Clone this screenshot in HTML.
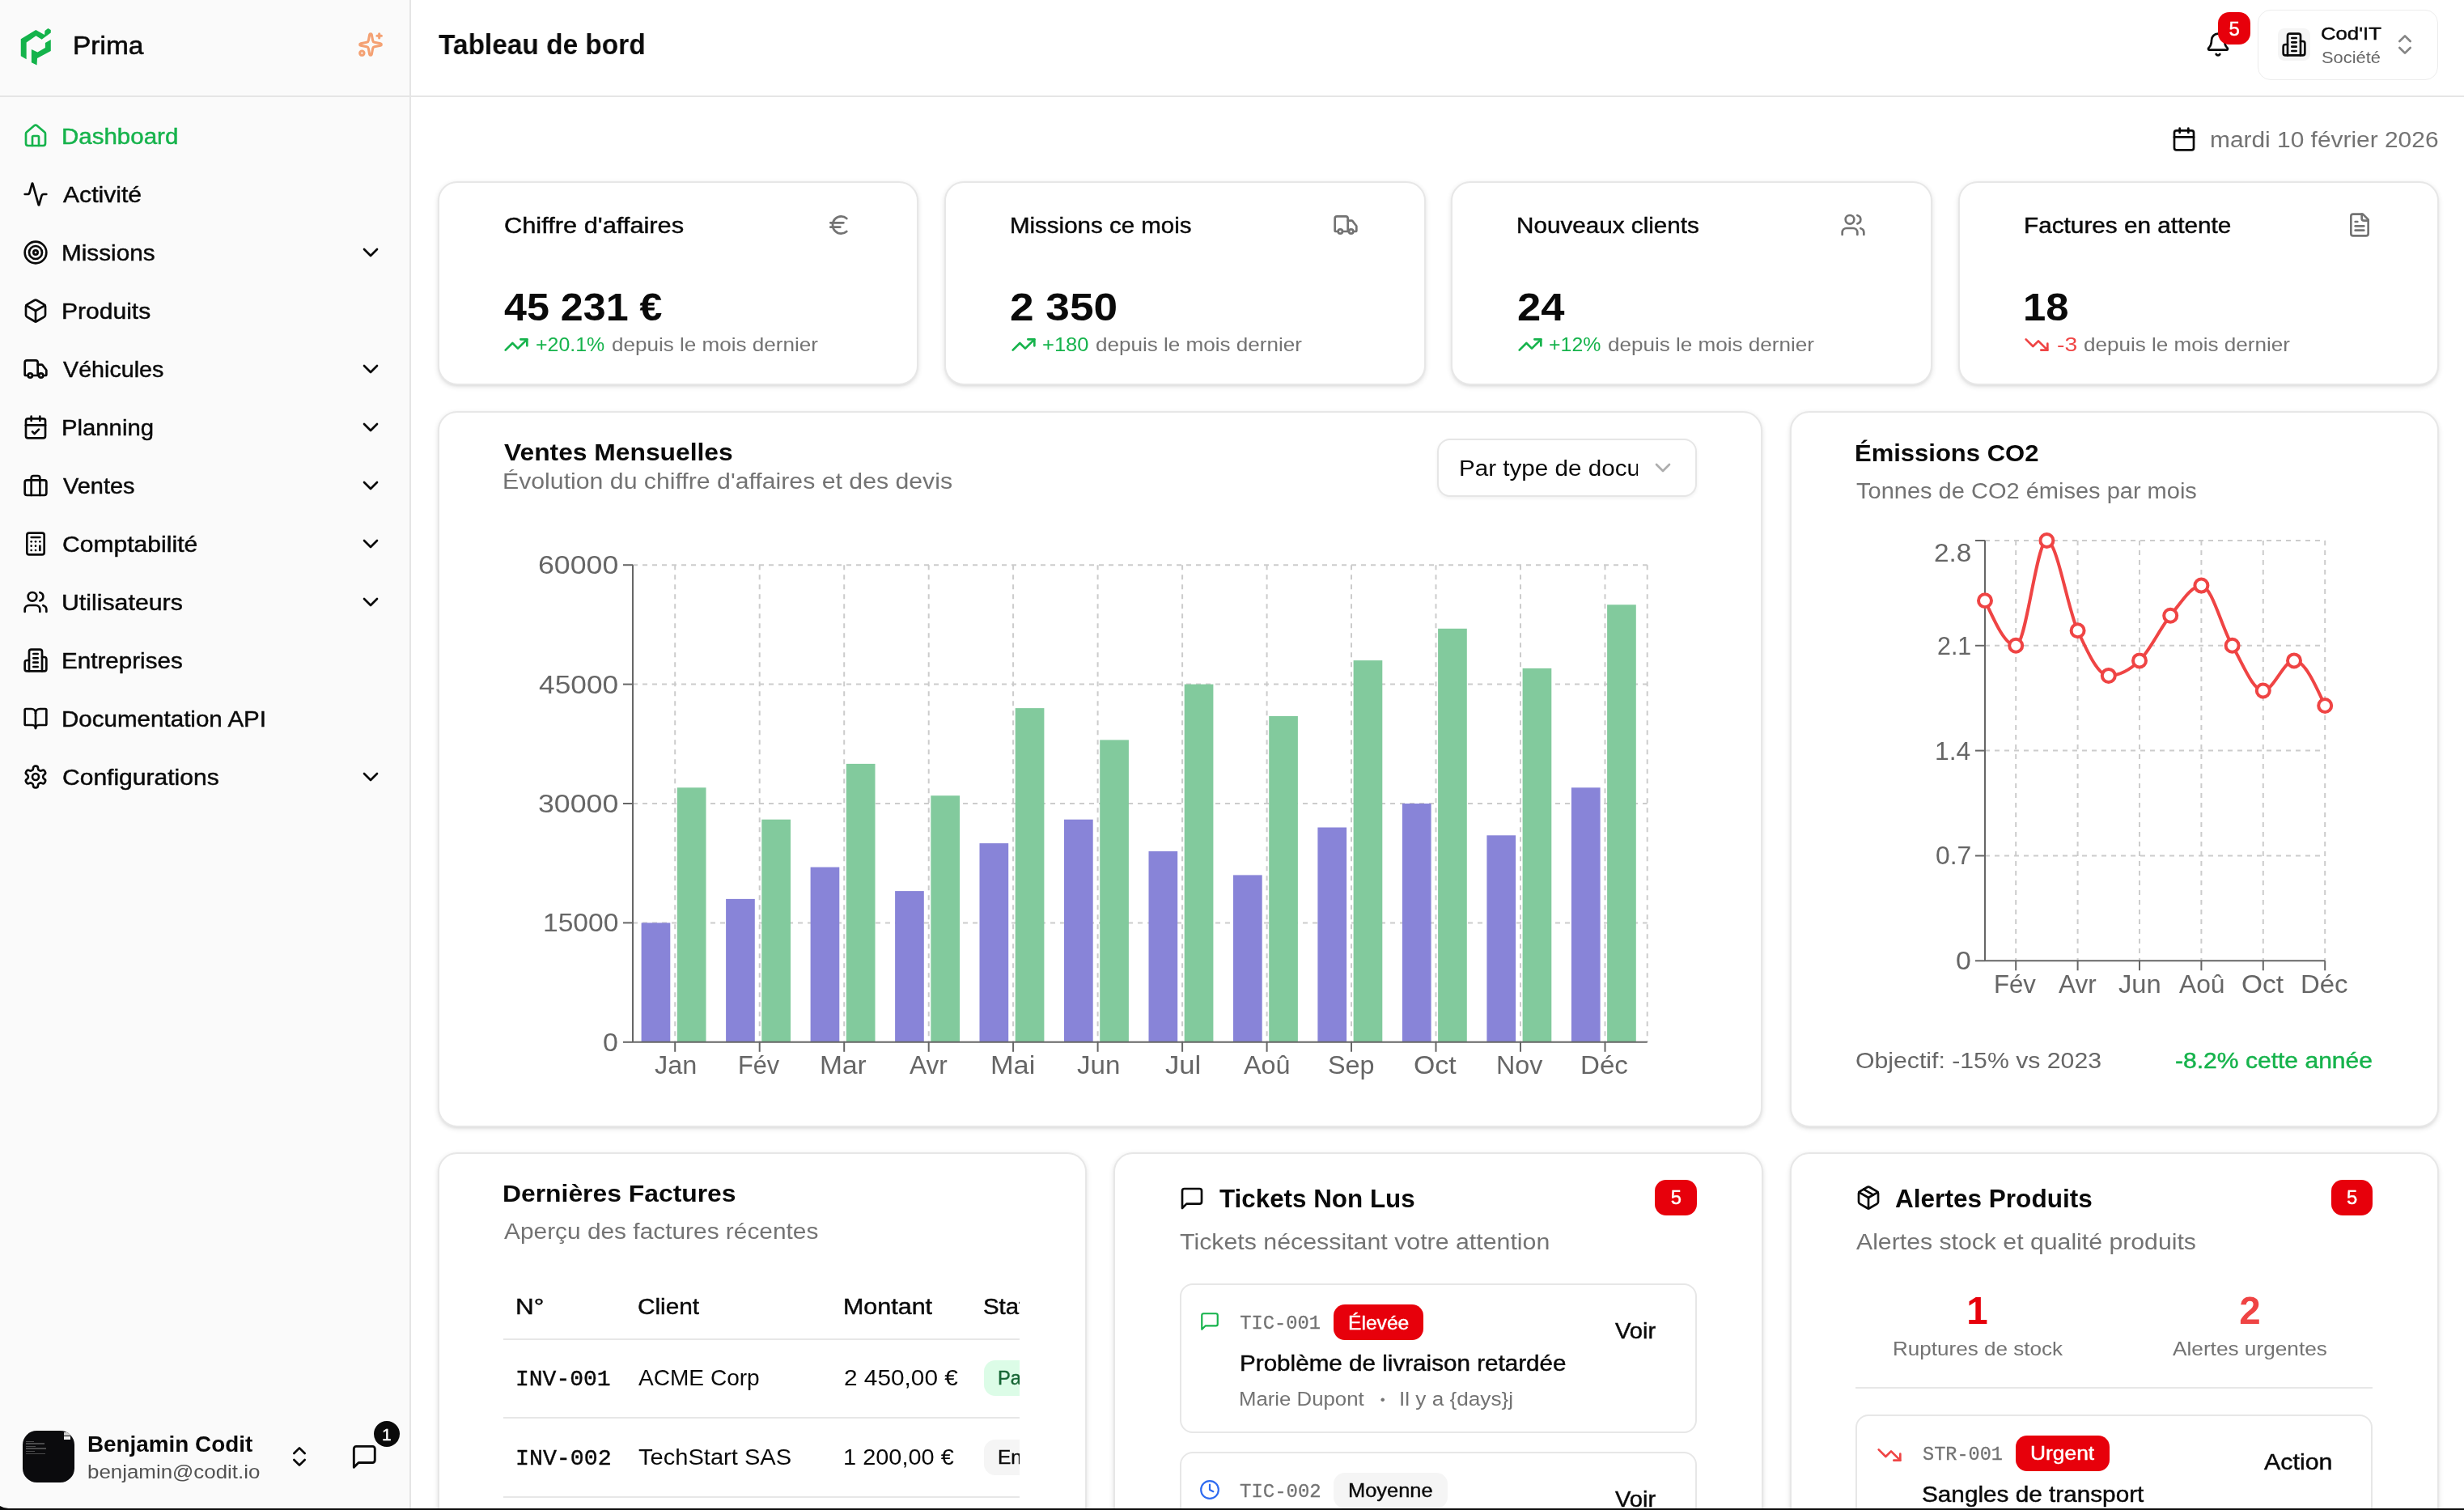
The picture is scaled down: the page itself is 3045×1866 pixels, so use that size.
<!DOCTYPE html>
<html lang="fr"><head><meta charset="utf-8"><title>Tableau de bord</title>
<style>
*{box-sizing:border-box;margin:0;padding:0}
html,body{width:3045px;height:1866px;overflow:hidden;background:#fff}
body{position:relative;font-family:"Liberation Sans",sans-serif;color:#0a0a0a;-webkit-font-smoothing:antialiased}
#root{position:absolute;left:0;top:0;width:3045px;height:1866px;will-change:transform}
.b,.i,.t,.c{position:absolute}
.t{white-space:pre;transform-origin:0 0;line-height:1}
.card{position:absolute;background:#fff;border:2px solid #e7e7e7;border-radius:24px;box-shadow:0 2px 6px rgba(0,0,0,.11),0 2px 4px -2px rgba(0,0,0,.11)}
.item{position:absolute;background:#fff;border:2px solid #e7e7e7;border-radius:16px}
.badge{position:absolute;border-radius:14px}
</style></head>
<body>
<div id="root">
<div class="b" style="left:0.00px;top:0.00px;width:506.00px;height:1866.00px;background:#fafafa"></div>
<div class="b" style="left:506.00px;top:0.00px;width:2.00px;height:1866.00px;background:#e5e5e5"></div>
<div class="b" style="left:0.00px;top:118.00px;width:3045.00px;height:2.00px;background:#e5e5e5"></div>
<svg class="i" style="left:20px;top:30px" width="50" height="55" viewBox="0 0 50 55"><g fill="#14b34b"><polygon points="5.76,18.25 24.27,7.05 35.03,13.08 35.47,7.91 39.34,5.12 42.78,7.05 42.78,10.50 31.59,18.68 24.49,14.37 12.65,22.55 12.65,43.21 5.76,39.34"/><polygon points="42.78,19.10 42.78,32.88 26.00,41.92 25.56,50.53 18.89,47.30 18.89,30.94 26.42,34.60 35.90,29.00 35.90,22.98"/></g></svg>
<div class="t" style="left:90.41px;top:40.00px;font-size:32px;color:#0a0a0a;transform:scaleX(1.0457);-webkit-text-stroke:0.6px #0a0a0a;">Prima</div>
<svg class="i" style="left:442.00px;top:38.90px" width="32" height="32" viewBox="0 0 24 24" fill="none" stroke="#f4a173" stroke-width="2.3" stroke-linecap="round" stroke-linejoin="round"><path d="M11.017 2.814a1 1 0 0 1 1.966 0l1.051 5.558a2 2 0 0 0 1.594 1.594l5.558 1.051a1 1 0 0 1 0 1.966l-5.558 1.051a2 2 0 0 0-1.594 1.594l-1.051 5.558a1 1 0 0 1-1.966 0l-1.051-5.558a2 2 0 0 0-1.594-1.594l-5.558-1.051a1 1 0 0 1 0-1.966l5.558-1.051a2 2 0 0 0 1.594-1.594z"/><path d="M20 2v4"/><path d="M22 4h-4"/><circle cx="4" cy="20" r="2"/></svg>
<svg class="i" style="left:27.80px;top:151.75px" width="32" height="32" viewBox="0 0 24 24" fill="none" stroke="#16b34c" stroke-width="2" stroke-linecap="round" stroke-linejoin="round"><path d="M15 21v-8a1 1 0 0 0-1-1h-4a1 1 0 0 0-1 1v8"/><path d="M3 10a2 2 0 0 1 .709-1.528l7-5.999a2 2 0 0 1 2.582 0l7 5.999A2 2 0 0 1 21 10v9a2 2 0 0 1-2 2H5a2 2 0 0 1-2-2z"/></svg>
<div class="t" style="left:75.97px;top:154.50px;font-size:27.7px;color:#16b34c;transform:scaleX(1.0655);-webkit-text-stroke:0.45px #16b34c;">Dashboard</div>
<svg class="i" style="left:27.80px;top:223.75px" width="32" height="32" viewBox="0 0 24 24" fill="none" stroke="#0a0a0a" stroke-width="2" stroke-linecap="round" stroke-linejoin="round"><path d="M22 12h-2.48a2 2 0 0 0-1.93 1.46l-2.35 8.36a.25.25 0 0 1-.48 0L9.24 2.18a.25.25 0 0 0-.48 0l-2.35 8.36A2 2 0 0 1 4.49 12H2"/></svg>
<div class="t" style="left:78.10px;top:226.50px;font-size:27.7px;color:#0a0a0a;transform:scaleX(1.0884);-webkit-text-stroke:0.45px #0a0a0a;">Activité</div>
<svg class="i" style="left:27.80px;top:295.75px" width="32" height="32" viewBox="0 0 24 24" fill="none" stroke="#0a0a0a" stroke-width="2" stroke-linecap="round" stroke-linejoin="round"><circle cx="12" cy="12" r="10"/><circle cx="12" cy="12" r="6"/><circle cx="12" cy="12" r="2"/></svg>
<div class="t" style="left:75.95px;top:298.50px;font-size:27.7px;color:#0a0a0a;transform:scaleX(1.0730);-webkit-text-stroke:0.45px #0a0a0a;">Missions</div>
<svg class="i" style="left:441.50px;top:295.75px" width="32" height="32" viewBox="0 0 24 24" fill="none" stroke="#0a0a0a" stroke-width="2" stroke-linecap="round" stroke-linejoin="round"><path d="m6 9 6 6 6-6"/></svg>
<svg class="i" style="left:27.80px;top:367.75px" width="32" height="32" viewBox="0 0 24 24" fill="none" stroke="#0a0a0a" stroke-width="2" stroke-linecap="round" stroke-linejoin="round"><path d="M21 8a2 2 0 0 0-1-1.73l-7-4a2 2 0 0 0-2 0l-7 4A2 2 0 0 0 3 8v8a2 2 0 0 0 1 1.73l7 4a2 2 0 0 0 2 0l7-4A2 2 0 0 0 21 16Z"/><path d="m3.3 7 8.7 5 8.7-5"/><path d="M12 22V12"/></svg>
<div class="t" style="left:75.93px;top:370.50px;font-size:27.7px;color:#0a0a0a;transform:scaleX(1.0848);-webkit-text-stroke:0.45px #0a0a0a;">Produits</div>
<svg class="i" style="left:27.80px;top:439.75px" width="32" height="32" viewBox="0 0 24 24" fill="none" stroke="#0a0a0a" stroke-width="2" stroke-linecap="round" stroke-linejoin="round"><path d="M14 18V6a2 2 0 0 0-2-2H4a2 2 0 0 0-2 2v11a1 1 0 0 0 1 1h2"/><path d="M15 18H9"/><path d="M19 18h2a1 1 0 0 0 1-1v-3.65a1 1 0 0 0-.22-.624l-3.48-4.35A1 1 0 0 0 17.52 8H14"/><circle cx="17" cy="18" r="2"/><circle cx="7" cy="18" r="2"/></svg>
<div class="t" style="left:78.10px;top:442.50px;font-size:27.7px;color:#0a0a0a;transform:scaleX(1.0360);-webkit-text-stroke:0.45px #0a0a0a;">Véhicules</div>
<svg class="i" style="left:441.50px;top:439.75px" width="32" height="32" viewBox="0 0 24 24" fill="none" stroke="#0a0a0a" stroke-width="2" stroke-linecap="round" stroke-linejoin="round"><path d="m6 9 6 6 6-6"/></svg>
<svg class="i" style="left:27.80px;top:511.75px" width="32" height="32" viewBox="0 0 24 24" fill="none" stroke="#0a0a0a" stroke-width="2" stroke-linecap="round" stroke-linejoin="round"><path d="M8 2v4"/><path d="M16 2v4"/><rect width="18" height="18" x="3" y="4" rx="2"/><path d="M3 10h18"/><path d="m9 16 2 2 4-4"/></svg>
<div class="t" style="left:75.98px;top:514.50px;font-size:27.7px;color:#0a0a0a;transform:scaleX(1.0578);-webkit-text-stroke:0.45px #0a0a0a;">Planning</div>
<svg class="i" style="left:441.50px;top:511.75px" width="32" height="32" viewBox="0 0 24 24" fill="none" stroke="#0a0a0a" stroke-width="2" stroke-linecap="round" stroke-linejoin="round"><path d="m6 9 6 6 6-6"/></svg>
<svg class="i" style="left:27.80px;top:583.75px" width="32" height="32" viewBox="0 0 24 24" fill="none" stroke="#0a0a0a" stroke-width="2" stroke-linecap="round" stroke-linejoin="round"><rect width="20" height="14" x="2" y="7" rx="2" ry="2"/><path d="M16 21V5a2 2 0 0 0-2-2h-4a2 2 0 0 0-2 2v16"/></svg>
<div class="t" style="left:78.10px;top:586.50px;font-size:27.7px;color:#0a0a0a;transform:scaleX(1.0462);-webkit-text-stroke:0.45px #0a0a0a;">Ventes</div>
<svg class="i" style="left:441.50px;top:583.75px" width="32" height="32" viewBox="0 0 24 24" fill="none" stroke="#0a0a0a" stroke-width="2" stroke-linecap="round" stroke-linejoin="round"><path d="m6 9 6 6 6-6"/></svg>
<svg class="i" style="left:27.80px;top:655.75px" width="32" height="32" viewBox="0 0 24 24" fill="none" stroke="#0a0a0a" stroke-width="2" stroke-linecap="round" stroke-linejoin="round"><rect width="16" height="20" x="4" y="2" rx="2"/><line x1="8" x2="16" y1="6" y2="6"/><line x1="16" x2="16" y1="14" y2="18"/><path d="M16 10h.01"/><path d="M12 10h.01"/><path d="M8 10h.01"/><path d="M12 14h.01"/><path d="M8 14h.01"/><path d="M12 18h.01"/><path d="M8 18h.01"/></svg>
<div class="t" style="left:77.01px;top:658.50px;font-size:27.7px;color:#0a0a0a;transform:scaleX(1.0866);-webkit-text-stroke:0.45px #0a0a0a;">Comptabilité</div>
<svg class="i" style="left:441.50px;top:655.75px" width="32" height="32" viewBox="0 0 24 24" fill="none" stroke="#0a0a0a" stroke-width="2" stroke-linecap="round" stroke-linejoin="round"><path d="m6 9 6 6 6-6"/></svg>
<svg class="i" style="left:27.80px;top:727.75px" width="32" height="32" viewBox="0 0 24 24" fill="none" stroke="#0a0a0a" stroke-width="2" stroke-linecap="round" stroke-linejoin="round"><path d="M16 21v-2a4 4 0 0 0-4-4H6a4 4 0 0 0-4 4v2"/><circle cx="9" cy="7" r="4"/><path d="M22 21v-2a4 4 0 0 0-3-3.87"/><path d="M16 3.13a4 4 0 0 1 0 7.75"/></svg>
<div class="t" style="left:75.91px;top:730.50px;font-size:27.7px;color:#0a0a0a;transform:scaleX(1.0940);-webkit-text-stroke:0.45px #0a0a0a;">Utilisateurs</div>
<svg class="i" style="left:441.50px;top:727.75px" width="32" height="32" viewBox="0 0 24 24" fill="none" stroke="#0a0a0a" stroke-width="2" stroke-linecap="round" stroke-linejoin="round"><path d="m6 9 6 6 6-6"/></svg>
<svg class="i" style="left:27.80px;top:799.75px" width="32" height="32" viewBox="0 0 24 24" fill="none" stroke="#0a0a0a" stroke-width="2" stroke-linecap="round" stroke-linejoin="round"><path d="M6 22V4a2 2 0 0 1 2-2h8a2 2 0 0 1 2 2v18Z"/><path d="M6 12H4a2 2 0 0 0-2 2v6a2 2 0 0 0 2 2h2"/><path d="M18 9h2a2 2 0 0 1 2 2v9a2 2 0 0 1-2 2h-2"/><path d="M10 6h4"/><path d="M10 10h4"/><path d="M10 14h4"/><path d="M10 18h4"/></svg>
<div class="t" style="left:75.96px;top:802.50px;font-size:27.7px;color:#0a0a0a;transform:scaleX(1.0693);-webkit-text-stroke:0.45px #0a0a0a;">Entreprises</div>
<svg class="i" style="left:27.80px;top:871.75px" width="32" height="32" viewBox="0 0 24 24" fill="none" stroke="#0a0a0a" stroke-width="2" stroke-linecap="round" stroke-linejoin="round"><path d="M12 7v14"/><path d="M3 18a1 1 0 0 1-1-1V4a1 1 0 0 1 1-1h5a4 4 0 0 1 4 4 4 4 0 0 1 4-4h5a1 1 0 0 1 1 1v13a1 1 0 0 1-1 1h-6a3 3 0 0 0-3 3 3 3 0 0 0-3-3z"/></svg>
<div class="t" style="left:75.97px;top:874.50px;font-size:27.7px;color:#0a0a0a;transform:scaleX(1.0675);-webkit-text-stroke:0.45px #0a0a0a;">Documentation API</div>
<svg class="i" style="left:27.80px;top:943.75px" width="32" height="32" viewBox="0 0 24 24" fill="none" stroke="#0a0a0a" stroke-width="2" stroke-linecap="round" stroke-linejoin="round"><path d="M12.22 2h-.44a2 2 0 0 0-2 2v.18a2 2 0 0 1-1 1.73l-.43.25a2 2 0 0 1-2 0l-.15-.08a2 2 0 0 0-2.73.73l-.22.38a2 2 0 0 0 .73 2.73l.15.1a2 2 0 0 1 1 1.72v.51a2 2 0 0 1-1 1.74l-.15.09a2 2 0 0 0-.73 2.73l.22.38a2 2 0 0 0 2.73.73l.15-.08a2 2 0 0 1 2 0l.43.25a2 2 0 0 1 1 1.73V20a2 2 0 0 0 2 2h.44a2 2 0 0 0 2-2v-.18a2 2 0 0 1 1-1.73l.43-.25a2 2 0 0 1 2 0l.15.08a2 2 0 0 0 2.73-.73l.22-.39a2 2 0 0 0-.73-2.73l-.15-.08a2 2 0 0 1-1-1.74v-.5a2 2 0 0 1 1-1.74l.15-.09a2 2 0 0 0 .73-2.73l-.22-.38a2 2 0 0 0-2.73-.73l-.15.08a2 2 0 0 1-2 0l-.43-.25a2 2 0 0 1-1-1.73V4a2 2 0 0 0-2-2z"/><circle cx="12" cy="12" r="3"/></svg>
<div class="t" style="left:77.02px;top:946.50px;font-size:27.7px;color:#0a0a0a;transform:scaleX(1.0849);-webkit-text-stroke:0.45px #0a0a0a;">Configurations</div>
<svg class="i" style="left:441.50px;top:943.75px" width="32" height="32" viewBox="0 0 24 24" fill="none" stroke="#0a0a0a" stroke-width="2" stroke-linecap="round" stroke-linejoin="round"><path d="m6 9 6 6 6-6"/></svg>
<div class="b" style="left:28px;top:1768px;width:63.8px;height:63.8px;background:#0b0b0d;border-radius:17.5px;overflow:hidden"><div class="b" style="left:50.8px;top:1.5px;width:8.5px;height:4.3px;background:#cfcfcf"></div><div class="b" style="left:50.8px;top:7.4px;width:8.5px;height:3.6px;background:#f2f2f2"></div><div class="b" style="left:4.2px;top:15.3px;width:23.3px;height:1.7px;background:#8a8a8a;opacity:.5"></div><div class="b" style="left:3.5px;top:13.4px;width:10px;height:1px;background:#777;opacity:.6"></div><div class="b" style="left:4.2px;top:21.1px;width:24.4px;height:1.7px;background:#8a8a8a;opacity:.5"></div><div class="b" style="left:3.5px;top:19.4px;width:12px;height:1px;background:#777;opacity:.6"></div><div class="b" style="left:4.2px;top:27.5px;width:23.8px;height:1.7px;background:#8a8a8a;opacity:.5"></div><div class="b" style="left:3.5px;top:25.4px;width:11px;height:1px;background:#777;opacity:.6"></div></div>
<div class="t" style="left:107.79px;top:1771.15px;font-size:27.7px;color:#0a0a0a;font-weight:700;transform:scaleX(1.0058);">Benjamin Codit</div>
<div class="t" style="left:107.71px;top:1806.62px;font-size:23.76px;color:#525252;transform:scaleX(1.0898);">benjamin@codit.io</div>
<svg class="i" style="left:354.00px;top:1784.00px" width="32" height="32" viewBox="0 0 24 24" fill="none" stroke="#0a0a0a" stroke-width="2" stroke-linecap="round" stroke-linejoin="round"><path d="m7 15 5 5 5-5"/><path d="m7 9 5-5 5 5"/></svg>
<svg class="i" style="left:433.20px;top:1783.10px" width="34.6" height="34.6" viewBox="0 0 24 24" fill="none" stroke="#0a0a0a" stroke-width="2" stroke-linecap="round" stroke-linejoin="round"><path d="M21 15a2 2 0 0 1-2 2H7l-4 4V5a2 2 0 0 1 2-2h14a2 2 0 0 1 2 2z"/></svg>
<div class="b" style="left:462.00px;top:1756.00px;width:32.00px;height:32.00px;background:#0a0a0a;border-radius:16px"></div>
<div class="t" style="left:472.00px;top:1761.50px;font-size:21px;color:#fff;-webkit-text-stroke:0.4px #fff;">1</div>
<div class="t" style="left:542.00px;top:38.40px;font-size:35.6px;color:#0a0a0a;font-weight:700;transform:scaleX(0.9393);">Tableau de bord</div>
<svg class="i" style="left:2725.00px;top:39.00px" width="32" height="32" viewBox="0 0 24 24" fill="none" stroke="#0a0a0a" stroke-width="2" stroke-linecap="round" stroke-linejoin="round"><path d="M10.268 21a2 2 0 0 0 3.464 0"/><path d="M3.262 15.326A1 1 0 0 0 4 17h16a1 1 0 0 0 .74-1.673C19.41 13.956 18 12.499 18 8A6 6 0 0 0 6 8c0 4.499-1.411 5.956-2.738 7.326"/></svg>
<div class="b" style="left:2741.00px;top:15.00px;width:40.00px;height:40.00px;background:#e7000b;border-radius:14px"></div>
<div class="t" style="left:2754.50px;top:23.80px;font-size:24px;color:#fff;-webkit-text-stroke:0.4px #fff;">5</div>
<div class="b" style="left:2790.00px;top:11.60px;width:223.00px;height:87.00px;border:1.5px solid #ececec;border-radius:16px;background:#fff"></div>
<div class="b" style="left:2815.00px;top:35.00px;width:40.00px;height:40.00px;background:#f5f5f5;border-radius:8px"></div>
<svg class="i" style="left:2819.00px;top:39.00px" width="32" height="32" viewBox="0 0 24 24" fill="none" stroke="#0a0a0a" stroke-width="2" stroke-linecap="round" stroke-linejoin="round"><path d="M6 22V4a2 2 0 0 1 2-2h8a2 2 0 0 1 2 2v18Z"/><path d="M6 12H4a2 2 0 0 0-2 2v6a2 2 0 0 0 2 2h2"/><path d="M18 9h2a2 2 0 0 1 2 2v9a2 2 0 0 1-2 2h-2"/><path d="M10 6h4"/><path d="M10 10h4"/><path d="M10 14h4"/><path d="M10 18h4"/></svg>
<div class="t" style="left:2867.56px;top:31.40px;font-size:22.6px;color:#0a0a0a;transform:scaleX(1.1378);-webkit-text-stroke:0.45px #0a0a0a;">Cod'IT</div>
<div class="t" style="left:2868.70px;top:61.60px;font-size:19.4px;color:#666;transform:scaleX(1.1269);">Société</div>
<svg class="i" style="left:2955.80px;top:39.00px" width="32" height="32" viewBox="0 0 24 24" fill="none" stroke="#858585" stroke-width="2" stroke-linecap="round" stroke-linejoin="round"><path d="m7 15 5 5 5-5"/><path d="m7 9 5-5 5 5"/></svg>
<svg class="i" style="left:2683.00px;top:155.50px" width="32" height="32" viewBox="0 0 24 24" fill="none" stroke="#0a0a0a" stroke-width="2" stroke-linecap="round" stroke-linejoin="round"><path d="M8 2v4"/><path d="M16 2v4"/><rect width="18" height="18" x="3" y="4" rx="2"/><path d="M3 10h18"/></svg>
<div class="t" style="left:2730.62px;top:158.65px;font-size:27.7px;color:#737373;transform:scaleX(1.0798);">mardi 10 février 2026</div>
<div class="card" style="left:540.7px;top:224px;width:594.5px;height:252.4px"></div>
<div class="t" style="left:622.89px;top:264.85px;font-size:27.7px;color:#0a0a0a;transform:scaleX(1.1123);-webkit-text-stroke:0.45px #0a0a0a;">Chiffre d'affaires</div>
<svg class="i" style="left:1021.00px;top:261.50px" width="32" height="32" viewBox="0 0 24 24" fill="none" stroke="#737373" stroke-width="2" stroke-linecap="round" stroke-linejoin="round"><path d="M4 10h12"/><path d="M4 14h9"/><path d="M19 6a7.7 7.7 0 0 0-5.2-2A7.9 7.9 0 0 0 6 12c0 4.4 3.5 8 7.8 8 2 0 3.8-.8 5.2-2"/></svg>
<div class="t" style="left:623.10px;top:355.75px;font-size:47.5px;color:#0a0a0a;font-weight:700;transform:scaleX(1.0570);">45 231 €</div>
<svg class="i" style="left:622.40px;top:410.00px" width="32" height="32" viewBox="0 0 24 24" fill="none" stroke="#16b34c" stroke-width="2" stroke-linecap="round" stroke-linejoin="round"><polyline points="22 7 13.5 15.5 8.5 10.5 2 17"/><polyline points="16 7 22 7 22 13"/></svg>
<div class="t" style="left:661.55px;top:414.12px;font-size:23.76px;color:#16b34c;transform:scaleX(1.0488);">+20.1%</div>
<div class="t" style="left:755.50px;top:414.12px;font-size:23.76px;color:#737373;transform:scaleX(1.0975);">depuis le mois dernier</div>
<div class="card" style="left:1167.0px;top:224px;width:594.5px;height:252.4px"></div>
<div class="t" style="left:1248.17px;top:264.85px;font-size:27.7px;color:#0a0a0a;transform:scaleX(1.0652);-webkit-text-stroke:0.45px #0a0a0a;">Missions ce mois</div>
<svg class="i" style="left:1647.30px;top:261.50px" width="32" height="32" viewBox="0 0 24 24" fill="none" stroke="#737373" stroke-width="2" stroke-linecap="round" stroke-linejoin="round"><path d="M14 18V6a2 2 0 0 0-2-2H4a2 2 0 0 0-2 2v11a1 1 0 0 0 1 1h2"/><path d="M15 18H9"/><path d="M19 18h2a1 1 0 0 0 1-1v-3.65a1 1 0 0 0-.22-.624l-3.48-4.35A1 1 0 0 0 17.52 8H14"/><circle cx="17" cy="18" r="2"/><circle cx="7" cy="18" r="2"/></svg>
<div class="t" style="left:1248.28px;top:355.75px;font-size:47.5px;color:#0a0a0a;font-weight:700;transform:scaleX(1.1198);">2 350</div>
<svg class="i" style="left:1248.70px;top:410.00px" width="32" height="32" viewBox="0 0 24 24" fill="none" stroke="#16b34c" stroke-width="2" stroke-linecap="round" stroke-linejoin="round"><polyline points="22 7 13.5 15.5 8.5 10.5 2 17"/><polyline points="16 7 22 7 22 13"/></svg>
<div class="t" style="left:1287.83px;top:414.12px;font-size:23.76px;color:#16b34c;transform:scaleX(1.0748);">+180</div>
<div class="t" style="left:1354.00px;top:414.12px;font-size:23.76px;color:#737373;transform:scaleX(1.0975);">depuis le mois dernier</div>
<div class="card" style="left:1793.3px;top:224px;width:594.5px;height:252.4px"></div>
<div class="t" style="left:1874.46px;top:264.85px;font-size:27.7px;color:#0a0a0a;transform:scaleX(1.0716);-webkit-text-stroke:0.45px #0a0a0a;">Nouveaux clients</div>
<svg class="i" style="left:2273.60px;top:261.50px" width="32" height="32" viewBox="0 0 24 24" fill="none" stroke="#737373" stroke-width="2" stroke-linecap="round" stroke-linejoin="round"><path d="M16 21v-2a4 4 0 0 0-4-4H6a4 4 0 0 0-4 4v2"/><circle cx="9" cy="7" r="4"/><path d="M22 21v-2a4 4 0 0 0-3-3.87"/><path d="M16 3.13a4 4 0 0 1 0 7.75"/></svg>
<div class="t" style="left:1874.59px;top:355.75px;font-size:47.5px;color:#0a0a0a;font-weight:700;transform:scaleX(1.1065);">24</div>
<svg class="i" style="left:1875.00px;top:410.00px" width="32" height="32" viewBox="0 0 24 24" fill="none" stroke="#16b34c" stroke-width="2" stroke-linecap="round" stroke-linejoin="round"><polyline points="22 7 13.5 15.5 8.5 10.5 2 17"/><polyline points="16 7 22 7 22 13"/></svg>
<div class="t" style="left:1914.15px;top:414.12px;font-size:23.76px;color:#16b34c;transform:scaleX(1.0483);">+12%</div>
<div class="t" style="left:1987.30px;top:414.12px;font-size:23.76px;color:#737373;transform:scaleX(1.0975);">depuis le mois dernier</div>
<div class="card" style="left:2419.6px;top:224px;width:594.5px;height:252.4px"></div>
<div class="t" style="left:2500.75px;top:264.85px;font-size:27.7px;color:#0a0a0a;transform:scaleX(1.0743);-webkit-text-stroke:0.45px #0a0a0a;">Factures en attente</div>
<svg class="i" style="left:2899.90px;top:261.50px" width="32" height="32" viewBox="0 0 24 24" fill="none" stroke="#737373" stroke-width="2" stroke-linecap="round" stroke-linejoin="round"><path d="M15 2H6a2 2 0 0 0-2 2v16a2 2 0 0 0 2 2h12a2 2 0 0 0 2-2V7Z"/><path d="M14 2v4a2 2 0 0 0 2 2h4"/><path d="M10 9H8"/><path d="M16 13H8"/><path d="M16 17H8"/></svg>
<div class="t" style="left:2499.86px;top:355.75px;font-size:47.5px;color:#0a0a0a;font-weight:700;transform:scaleX(1.0705);">18</div>
<svg class="i" style="left:2501.30px;top:410.00px" width="32" height="32" viewBox="0 0 24 24" fill="none" stroke="#ef4444" stroke-width="2" stroke-linecap="round" stroke-linejoin="round"><polyline points="22 17 13.5 8.5 8.5 13.5 2 7"/><polyline points="16 17 22 17 22 11"/></svg>
<div class="t" style="left:2541.81px;top:414.12px;font-size:23.76px;color:#ef4444;transform:scaleX(1.1904);">-3</div>
<div class="t" style="left:2575.30px;top:414.12px;font-size:23.76px;color:#737373;transform:scaleX(1.0975);">depuis le mois dernier</div>
<div class="card" style="left:540.7px;top:508px;width:1637.4px;height:884.5px"></div>
<div class="t" style="left:623.40px;top:544.10px;font-size:30px;color:#0a0a0a;font-weight:700;transform:scaleX(1.0597);">Ventes Mensuelles</div>
<div class="t" style="left:621.22px;top:580.85px;font-size:27.7px;color:#737373;transform:scaleX(1.0923);">Évolution du chiffre d'affaires et des devis</div>
<div class="b" style="left:1776.40px;top:541.80px;width:320.60px;height:71.80px;border:2px solid #e6e6e6;border-radius:16px;background:#fff;box-shadow:0 2px 4px rgba(0,0,0,.06)"></div>
<div class="c" style="left:1790px;top:550px;width:233.8px;height:56px;overflow:hidden">
<div class="t" style="left:12.86px;top:15.05px;font-size:27.7px;color:#0a0a0a;transform:scaleX(1.0698);">Par type de docu</div>
</div>
<svg class="i" style="left:2038.60px;top:562.20px" width="32" height="32" viewBox="0 0 24 24" fill="none" stroke="#adadad" stroke-width="2" stroke-linecap="round" stroke-linejoin="round"><path d="m6 9 6 6 6-6"/></svg>
<div class="card" style="left:2212.3px;top:508px;width:801.7px;height:884.5px"></div>
<svg class="i" style="left:0;top:0" width="3045" height="1866" viewBox="0 0 3045 1866"><g stroke="#ccc" stroke-width="2" stroke-dasharray="6 6" fill="none"><line x1="782.0" y1="1140.4" x2="2035.7" y2="1140.4"/><line x1="782.0" y1="993.0" x2="2035.7" y2="993.0"/><line x1="782.0" y1="845.6" x2="2035.7" y2="845.6"/><line x1="782.0" y1="698.2" x2="2035.7" y2="698.2"/><line x1="834.2" y1="698.2" x2="834.2" y2="1287.8"/><line x1="938.7" y1="698.2" x2="938.7" y2="1287.8"/><line x1="1043.2" y1="698.2" x2="1043.2" y2="1287.8"/><line x1="1147.7" y1="698.2" x2="1147.7" y2="1287.8"/><line x1="1252.1" y1="698.2" x2="1252.1" y2="1287.8"/><line x1="1356.6" y1="698.2" x2="1356.6" y2="1287.8"/><line x1="1461.1" y1="698.2" x2="1461.1" y2="1287.8"/><line x1="1565.6" y1="698.2" x2="1565.6" y2="1287.8"/><line x1="1670.0" y1="698.2" x2="1670.0" y2="1287.8"/><line x1="1774.5" y1="698.2" x2="1774.5" y2="1287.8"/><line x1="1879.0" y1="698.2" x2="1879.0" y2="1287.8"/><line x1="1983.5" y1="698.2" x2="1983.5" y2="1287.8"/><line x1="2035.7" y1="698.2" x2="2035.7" y2="1287.8"/></g><rect x="792.6" y="1140.4" width="35.7" height="147.4" fill="#8884d8"/><rect x="836.8" y="973.3" width="35.7" height="314.5" fill="#82ca9d"/><rect x="897.1" y="1110.9" width="35.7" height="176.9" fill="#8884d8"/><rect x="941.3" y="1012.7" width="35.7" height="275.1" fill="#82ca9d"/><rect x="1001.6" y="1071.6" width="35.7" height="216.2" fill="#8884d8"/><rect x="1045.8" y="943.9" width="35.7" height="343.9" fill="#82ca9d"/><rect x="1106.1" y="1101.1" width="35.7" height="186.7" fill="#8884d8"/><rect x="1150.3" y="983.2" width="35.7" height="304.6" fill="#82ca9d"/><rect x="1210.5" y="1042.1" width="35.7" height="245.7" fill="#8884d8"/><rect x="1254.7" y="875.1" width="35.7" height="412.7" fill="#82ca9d"/><rect x="1315.0" y="1012.7" width="35.7" height="275.1" fill="#8884d8"/><rect x="1359.2" y="914.4" width="35.7" height="373.4" fill="#82ca9d"/><rect x="1419.5" y="1052.0" width="35.7" height="235.8" fill="#8884d8"/><rect x="1463.7" y="845.6" width="35.7" height="442.2" fill="#82ca9d"/><rect x="1524.0" y="1081.4" width="35.7" height="206.4" fill="#8884d8"/><rect x="1568.2" y="884.9" width="35.7" height="402.9" fill="#82ca9d"/><rect x="1628.4" y="1022.5" width="35.7" height="265.3" fill="#8884d8"/><rect x="1672.6" y="816.1" width="35.7" height="471.7" fill="#82ca9d"/><rect x="1732.9" y="993.0" width="35.7" height="294.8" fill="#8884d8"/><rect x="1777.1" y="776.8" width="35.7" height="511.0" fill="#82ca9d"/><rect x="1837.4" y="1032.3" width="35.7" height="255.5" fill="#8884d8"/><rect x="1881.6" y="825.9" width="35.7" height="461.9" fill="#82ca9d"/><rect x="1941.9" y="973.3" width="35.7" height="314.5" fill="#8884d8"/><rect x="1986.1" y="747.3" width="35.7" height="540.5" fill="#82ca9d"/><g stroke="#666" stroke-width="2" fill="none"><line x1="782.0" y1="698.2" x2="782.0" y2="1287.8"/><line x1="782.0" y1="1287.8" x2="2035.7" y2="1287.8"/><line x1="770.0" y1="1287.8" x2="782.0" y2="1287.8"/><line x1="770.0" y1="1140.4" x2="782.0" y2="1140.4"/><line x1="770.0" y1="993.0" x2="782.0" y2="993.0"/><line x1="770.0" y1="845.6" x2="782.0" y2="845.6"/><line x1="770.0" y1="698.2" x2="782.0" y2="698.2"/><line x1="834.2" y1="1287.8" x2="834.2" y2="1299.8"/><line x1="938.7" y1="1287.8" x2="938.7" y2="1299.8"/><line x1="1043.2" y1="1287.8" x2="1043.2" y2="1299.8"/><line x1="1147.7" y1="1287.8" x2="1147.7" y2="1299.8"/><line x1="1252.1" y1="1287.8" x2="1252.1" y2="1299.8"/><line x1="1356.6" y1="1287.8" x2="1356.6" y2="1299.8"/><line x1="1461.1" y1="1287.8" x2="1461.1" y2="1299.8"/><line x1="1565.6" y1="1287.8" x2="1565.6" y2="1299.8"/><line x1="1670.0" y1="1287.8" x2="1670.0" y2="1299.8"/><line x1="1774.5" y1="1287.8" x2="1774.5" y2="1299.8"/><line x1="1879.0" y1="1287.8" x2="1879.0" y2="1299.8"/><line x1="1983.5" y1="1287.8" x2="1983.5" y2="1299.8"/></g><g stroke="#ccc" stroke-width="2" stroke-dasharray="6 6" fill="none"><line x1="2453.0" y1="1057.5" x2="2873.2" y2="1057.5"/><line x1="2453.0" y1="927.6" x2="2873.2" y2="927.6"/><line x1="2453.0" y1="797.8" x2="2873.2" y2="797.8"/><line x1="2453.0" y1="668.0" x2="2873.2" y2="668.0"/><line x1="2491.2" y1="668.0" x2="2491.2" y2="1187.3"/><line x1="2567.6" y1="668.0" x2="2567.6" y2="1187.3"/><line x1="2644.0" y1="668.0" x2="2644.0" y2="1187.3"/><line x1="2720.4" y1="668.0" x2="2720.4" y2="1187.3"/><line x1="2796.8" y1="668.0" x2="2796.8" y2="1187.3"/><line x1="2873.2" y1="668.0" x2="2873.2" y2="1187.3"/></g><g stroke="#666" stroke-width="2" fill="none"><line x1="2453.0" y1="668.0" x2="2453.0" y2="1187.3"/><line x1="2453.0" y1="1187.3" x2="2873.2" y2="1187.3"/><line x1="2441.0" y1="1187.3" x2="2453.0" y2="1187.3"/><line x1="2441.0" y1="1057.5" x2="2453.0" y2="1057.5"/><line x1="2441.0" y1="927.6" x2="2453.0" y2="927.6"/><line x1="2441.0" y1="797.8" x2="2453.0" y2="797.8"/><line x1="2441.0" y1="668.0" x2="2453.0" y2="668.0"/><line x1="2491.2" y1="1187.3" x2="2491.2" y2="1199.3"/><line x1="2567.6" y1="1187.3" x2="2567.6" y2="1199.3"/><line x1="2644.0" y1="1187.3" x2="2644.0" y2="1199.3"/><line x1="2720.4" y1="1187.3" x2="2720.4" y2="1199.3"/><line x1="2796.8" y1="1187.3" x2="2796.8" y2="1199.3"/><line x1="2873.2" y1="1187.3" x2="2873.2" y2="1199.3"/></g><path d="M2453.00,742.19C2465.73,770.01,2478.47,797.82,2491.20,797.82C2503.93,797.82,2516.67,668.00,2529.40,668.00C2542.13,668.00,2554.87,751.46,2567.60,779.28C2580.33,807.10,2593.07,834.92,2605.80,834.92C2618.53,834.92,2631.27,828.74,2644.00,816.37C2656.73,804.01,2669.47,776.19,2682.20,760.73C2694.93,745.28,2707.67,723.64,2720.40,723.64C2733.13,723.64,2745.87,776.19,2758.60,797.82C2771.33,819.46,2784.07,853.46,2796.80,853.46C2809.53,853.46,2822.27,816.37,2835.00,816.37C2847.73,816.37,2860.47,844.19,2873.20,872.01" fill="none" stroke="#ef4444" stroke-width="4"/><g fill="#fff" stroke="#ef4444" stroke-width="4"><circle cx="2453.0" cy="742.2" r="8"/><circle cx="2491.2" cy="797.8" r="8"/><circle cx="2529.4" cy="668.0" r="8"/><circle cx="2567.6" cy="779.3" r="8"/><circle cx="2605.8" cy="834.9" r="8"/><circle cx="2644.0" cy="816.4" r="8"/><circle cx="2682.2" cy="760.7" r="8"/><circle cx="2720.4" cy="723.6" r="8"/><circle cx="2758.6" cy="797.8" r="8"/><circle cx="2796.8" cy="853.5" r="8"/><circle cx="2835.0" cy="816.4" r="8"/><circle cx="2873.2" cy="872.0" r="8"/></g></svg>
<div class="t" style="left:745.41px;top:1272.80px;font-size:31px;color:#666;transform:scaleX(1.0938);">0</div>
<div class="t" style="left:670.83px;top:1125.40px;font-size:31px;color:#666;transform:scaleX(1.0838);">15000</div>
<div class="t" style="left:664.95px;top:978.00px;font-size:31px;color:#666;transform:scaleX(1.1523);">30000</div>
<div class="t" style="left:666.10px;top:830.60px;font-size:31px;color:#666;transform:scaleX(1.1389);">45000</div>
<div class="t" style="left:664.95px;top:683.20px;font-size:31px;color:#666;transform:scaleX(1.1523);">60000</div>
<div class="t" style="left:808.74px;top:1301.30px;font-size:31px;color:#666;transform:scaleX(1.0464);">Jan</div>
<div class="t" style="left:911.88px;top:1301.30px;font-size:31px;color:#666;transform:scaleX(0.9905);">Fév</div>
<div class="t" style="left:1013.43px;top:1301.30px;font-size:31px;color:#666;transform:scaleX(1.0810);">Mar</div>
<div class="t" style="left:1124.46px;top:1301.30px;font-size:31px;color:#666;transform:scaleX(1.0172);">Avr</div>
<div class="t" style="left:1224.42px;top:1301.30px;font-size:31px;color:#666;transform:scaleX(1.1072);">Mai</div>
<div class="t" style="left:1330.61px;top:1301.30px;font-size:31px;color:#666;transform:scaleX(1.0669);">Jun</div>
<div class="t" style="left:1439.99px;top:1301.30px;font-size:31px;color:#666;transform:scaleX(1.1182);">Jul</div>
<div class="t" style="left:1537.46px;top:1301.30px;font-size:31px;color:#666;transform:scaleX(1.0423);">Aoû</div>
<div class="t" style="left:1641.39px;top:1301.30px;font-size:31px;color:#666;transform:scaleX(1.0431);">Sep</div>
<div class="t" style="left:1747.42px;top:1301.30px;font-size:31px;color:#666;transform:scaleX(1.0921);">Oct</div>
<div class="t" style="left:1849.01px;top:1301.30px;font-size:31px;color:#666;transform:scaleX(1.0405);">Nov</div>
<div class="t" style="left:1953.23px;top:1301.30px;font-size:31px;color:#666;transform:scaleX(1.0679);">Déc</div>
<div class="t" style="left:2292.23px;top:544.80px;font-size:30px;color:#0a0a0a;font-weight:700;transform:scaleX(1.0331);">Émissions CO2</div>
<div class="t" style="left:2294.30px;top:593.25px;font-size:27.7px;color:#737373;transform:scaleX(1.0479);">Tonnes de CO2 émises par mois</div>
<div class="t" style="left:2416.71px;top:1172.30px;font-size:31px;color:#666;transform:scaleX(1.0938);">0</div>
<div class="t" style="left:2392.27px;top:1042.47px;font-size:31px;color:#666;transform:scaleX(1.0281);">0.7</div>
<div class="t" style="left:2391.24px;top:912.65px;font-size:31px;color:#666;transform:scaleX(1.0281);">1.4</div>
<div class="t" style="left:2394.32px;top:782.83px;font-size:31px;color:#666;transform:scaleX(0.9791);">2.1</div>
<div class="t" style="left:2390.22px;top:667.80px;font-size:31px;color:#666;transform:scaleX(1.0770);">2.8</div>
<div class="t" style="left:2463.99px;top:1201.00px;font-size:31px;color:#666;transform:scaleX(1.0044);">Fév</div>
<div class="t" style="left:2544.45px;top:1201.00px;font-size:31px;color:#666;transform:scaleX(1.0150);">Avr</div>
<div class="t" style="left:2618.30px;top:1201.00px;font-size:31px;color:#666;transform:scaleX(1.0546);">Jun</div>
<div class="t" style="left:2692.80px;top:1201.00px;font-size:31px;color:#666;transform:scaleX(1.0238);">Aoû</div>
<div class="t" style="left:2770.02px;top:1201.00px;font-size:31px;color:#666;transform:scaleX(1.0795);">Oct</div>
<div class="t" style="left:2843.13px;top:1201.00px;font-size:31px;color:#666;transform:scaleX(1.0622);">Déc</div>
<div class="t" style="left:2293.21px;top:1296.85px;font-size:27.7px;color:#666;transform:scaleX(1.0915);">Objectif: -15% vs 2023</div>
<div class="t" style="left:2687.61px;top:1296.85px;font-size:27.7px;color:#16b34c;transform:scaleX(1.0858);-webkit-text-stroke:0.45px #16b34c;">-8.2% cette année</div>
<div class="card" style="left:540.7px;top:1424px;width:802.6px;height:520px"></div>
<div class="t" style="left:620.78px;top:1460.20px;font-size:30px;color:#0a0a0a;font-weight:700;transform:scaleX(1.0616);">Dernières Factures</div>
<div class="t" style="left:622.90px;top:1508.05px;font-size:27.7px;color:#737373;transform:scaleX(1.0785);">Aperçu des factures récentes</div>
<div class="c" style="left:622px;top:1560px;width:638.4px;height:303px;overflow:hidden">
<div class="b" style="left:0;top:93.5px;width:700px;height:2px;background:#e7e7e7"></div>
<div class="b" style="left:0;top:191px;width:700px;height:2px;background:#e7e7e7"></div>
<div class="b" style="left:0;top:289.3px;width:700px;height:2px;background:#e7e7e7"></div>
<div class="b" style="left:594.4px;top:121.4px;width:120px;height:43.6px;background:#dcfce7;border-radius:14px"></div>
<div class="b" style="left:594.4px;top:219.3px;width:140px;height:43.6px;background:#f5f5f5;border-radius:14px"></div>
<div class="t" style="left:14.63px;top:40.95px;font-size:27.7px;color:#0a0a0a;transform:scaleX(1.1359);-webkit-text-stroke:0.45px #0a0a0a;">N°</div>
<div class="t" style="left:165.53px;top:40.95px;font-size:27.7px;color:#0a0a0a;transform:scaleX(1.0743);-webkit-text-stroke:0.45px #0a0a0a;">Client</div>
<div class="t" style="left:419.70px;top:40.95px;font-size:27.7px;color:#0a0a0a;transform:scaleX(1.1001);-webkit-text-stroke:0.45px #0a0a0a;">Montant</div>
<div class="t" style="left:593.34px;top:40.95px;font-size:27.7px;color:#0a0a0a;transform:scaleX(1.0607);-webkit-text-stroke:0.45px #0a0a0a;">Statut</div>
<div class="t" style="left:14.88px;top:131.15px;font-size:27.7px;color:#0a0a0a;font-family:'Liberation Mono', monospace;transform:scaleX(1.0115);-webkit-text-stroke:0.4px #0a0a0a;">INV-001</div>
<div class="t" style="left:166.60px;top:129.15px;font-size:27.7px;color:#0a0a0a;transform:scaleX(1.0136);">ACME Corp</div>
<div class="t" style="left:420.82px;top:129.15px;font-size:27.7px;color:#0a0a0a;transform:scaleX(1.0759);">2 450,00 €</div>
<div class="t" style="left:611.30px;top:130.62px;font-size:23.76px;color:#166534;transform:scaleX(0.9980);-webkit-text-stroke:0.4px #166534;">Payée</div>
<div class="t" style="left:14.86px;top:229.35px;font-size:27.7px;color:#0a0a0a;font-family:'Liberation Mono', monospace;transform:scaleX(1.0205);-webkit-text-stroke:0.4px #0a0a0a;">INV-002</div>
<div class="t" style="left:166.60px;top:227.35px;font-size:27.7px;color:#0a0a0a;transform:scaleX(1.0502);">TechStart SAS</div>
<div class="t" style="left:419.81px;top:227.35px;font-size:27.7px;color:#0a0a0a;transform:scaleX(1.0454);">1 200,00 €</div>
<div class="t" style="left:611.27px;top:228.82px;font-size:23.76px;color:#0a0a0a;transform:scaleX(1.0274);-webkit-text-stroke:0.4px #0a0a0a;">En attente</div>
</div>
<div class="card" style="left:1376.1px;top:1424px;width:802.6px;height:520px"></div>
<svg class="i" style="left:1457.00px;top:1465.00px" width="32" height="32" viewBox="0 0 24 24" fill="none" stroke="#0a0a0a" stroke-width="2" stroke-linecap="round" stroke-linejoin="round"><path d="M21 15a2 2 0 0 1-2 2H7l-4 4V5a2 2 0 0 1 2-2h14a2 2 0 0 1 2 2z"/></svg>
<div class="t" style="left:1506.60px;top:1466.20px;font-size:31px;color:#0a0a0a;font-weight:700;transform:scaleX(1.0116);">Tickets Non Lus</div>
<div class="b" style="left:2045.30px;top:1458.00px;width:51.80px;height:43.60px;background:#e7000b;border-radius:14px"></div>
<div class="t" style="left:2064.70px;top:1467.92px;font-size:23.76px;color:#fff;-webkit-text-stroke:0.4px #fff;">5</div>
<div class="t" style="left:1458.20px;top:1520.55px;font-size:27.7px;color:#737373;transform:scaleX(1.0952);">Tickets nécessitant votre attention</div>
<div class="item" style="left:1457.7px;top:1586.3px;width:639.2px;height:184.6px"></div>
<svg class="i" style="left:1482.00px;top:1620.00px" width="26" height="26" viewBox="0 0 24 24" fill="none" stroke="#16b34c" stroke-width="2" stroke-linecap="round" stroke-linejoin="round"><path d="M21 15a2 2 0 0 1-2 2H7l-4 4V5a2 2 0 0 1 2-2h14a2 2 0 0 1 2 2z"/></svg>
<div class="t" style="left:1532.20px;top:1624.42px;font-size:23.76px;color:#737373;font-family:'Liberation Mono', monospace;-webkit-text-stroke:0.3px #737373;">TIC-001</div>
<div class="b" style="left:1648.00px;top:1612.00px;width:111.00px;height:43.70px;background:#e7000b;border-radius:14px"></div>
<div class="t" style="left:1665.86px;top:1623.02px;font-size:23.76px;color:#fff;transform:scaleX(1.0363);-webkit-text-stroke:0.4px #fff;">Élevée</div>
<div class="t" style="left:1995.90px;top:1630.65px;font-size:27.7px;color:#0a0a0a;transform:scaleX(1.0529);-webkit-text-stroke:0.45px #0a0a0a;">Voir</div>
<div class="t" style="left:1531.56px;top:1671.05px;font-size:27.7px;color:#0a0a0a;transform:scaleX(1.0703);-webkit-text-stroke:0.45px #0a0a0a;">Problème de livraison retardée</div>
<div class="t" style="left:1531.12px;top:1716.52px;font-size:23.76px;color:#737373;transform:scaleX(1.0847);">Marie Dupont</div>
<div class="t" style="left:1705.80px;top:1721.20px;font-size:17px;color:#737373;">•</div>
<div class="t" style="left:1729.40px;top:1716.52px;font-size:23.76px;color:#737373;transform:scaleX(1.1011);">Il y a {days}j</div>
<div class="item" style="left:1457.7px;top:1794.3px;width:639.2px;height:183px"></div>
<svg class="i" style="left:1482.00px;top:1827.70px" width="26" height="26" viewBox="0 0 24 24" fill="none" stroke="#2f6bf0" stroke-width="2" stroke-linecap="round" stroke-linejoin="round"><circle cx="12" cy="12" r="10"/><polyline points="12 6 12 12 16 14"/></svg>
<div class="t" style="left:1532.20px;top:1831.62px;font-size:23.76px;color:#737373;font-family:'Liberation Mono', monospace;transform:scaleX(1.0100);-webkit-text-stroke:0.3px #737373;">TIC-002</div>
<div class="b" style="left:1648.00px;top:1820.00px;width:140.60px;height:43.70px;background:#f5f5f5;border-radius:14px"></div>
<div class="t" style="left:1665.83px;top:1829.62px;font-size:23.76px;color:#0a0a0a;transform:scaleX(1.0705);-webkit-text-stroke:0.4px #0a0a0a;">Moyenne</div>
<div class="t" style="left:1995.90px;top:1838.65px;font-size:27.7px;color:#0a0a0a;transform:scaleX(1.0529);-webkit-text-stroke:0.45px #0a0a0a;">Voir</div>
<div class="card" style="left:2211.6px;top:1424px;width:802.4px;height:520px"></div>
<svg class="i" style="left:2292.70px;top:1464.00px" width="32" height="32" viewBox="0 0 24 24" fill="none" stroke="#0a0a0a" stroke-width="2" stroke-linecap="round" stroke-linejoin="round"><path d="M11 21.73a2 2 0 0 0 2 0l7-4A2 2 0 0 0 21 16V8a2 2 0 0 0-1-1.73l-7-4a2 2 0 0 0-2 0l-7 4A2 2 0 0 0 3 8v8a2 2 0 0 0 1 1.73z"/><path d="M12 22V12"/><polyline points="3.29 7 12 12 20.71 7"/><path d="m7.5 4.27 9 5.15"/></svg>
<div class="t" style="left:2342.30px;top:1465.90px;font-size:31px;color:#0a0a0a;font-weight:700;transform:scaleX(1.0180);">Alertes Produits</div>
<div class="b" style="left:2880.70px;top:1458.30px;width:51.50px;height:43.60px;background:#e7000b;border-radius:14px"></div>
<div class="t" style="left:2899.90px;top:1468.22px;font-size:23.76px;color:#fff;-webkit-text-stroke:0.4px #fff;">5</div>
<div class="t" style="left:2294.30px;top:1520.65px;font-size:27.7px;color:#737373;transform:scaleX(1.0914);">Alertes stock et qualité produits</div>
<div class="t" style="left:2430.20px;top:1595.65px;font-size:47.5px;color:#e7000b;font-weight:700;">1</div>
<div class="t" style="left:2767.20px;top:1595.65px;font-size:47.5px;color:#ef4444;font-weight:700;">2</div>
<div class="t" style="left:2338.80px;top:1655.12px;font-size:23.76px;color:#737373;transform:scaleX(1.0969);">Ruptures de stock</div>
<div class="t" style="left:2684.60px;top:1655.12px;font-size:23.76px;color:#737373;transform:scaleX(1.1036);">Alertes urgentes</div>
<div class="b" style="left:2293.30px;top:1713.60px;width:638.90px;height:2.00px;background:#e7e7e7"></div>
<div class="item" style="left:2292.8px;top:1748.3px;width:639.2px;height:183px"></div>
<svg class="i" style="left:2319.00px;top:1782.00px" width="32" height="32" viewBox="0 0 24 24" fill="none" stroke="#ef4444" stroke-width="2" stroke-linecap="round" stroke-linejoin="round"><polyline points="22 17 13.5 8.5 8.5 13.5 2 7"/><polyline points="16 17 22 17 22 11"/></svg>
<div class="t" style="left:2375.60px;top:1785.62px;font-size:23.76px;color:#737373;font-family:'Liberation Mono', monospace;transform:scaleX(0.9918);-webkit-text-stroke:0.3px #737373;">STR-001</div>
<div class="b" style="left:2490.80px;top:1773.80px;width:116.20px;height:43.90px;background:#e7000b;border-radius:14px"></div>
<div class="t" style="left:2508.59px;top:1783.62px;font-size:23.76px;color:#fff;transform:scaleX(1.1105);-webkit-text-stroke:0.4px #fff;">Urgent</div>
<div class="t" style="left:2798.40px;top:1792.65px;font-size:27.7px;color:#0a0a0a;transform:scaleX(1.0986);-webkit-text-stroke:0.45px #0a0a0a;">Action</div>
<div class="t" style="left:2374.53px;top:1832.75px;font-size:27.7px;color:#0a0a0a;transform:scaleX(1.0737);-webkit-text-stroke:0.45px #0a0a0a;">Sangles de transport</div>
<div class="b" style="left:0.00px;top:1864.00px;width:3045.00px;height:2.00px;background:#0c0c0c"></div>
<svg class="i" style="left:0;top:1856px" width="12" height="10" viewBox="0 0 12 10"><path d="M0 5 A20 20 0 0 0 10.5 8 V10 H0 Z" fill="#0c0c0c"/></svg>
</div>
</body></html>
